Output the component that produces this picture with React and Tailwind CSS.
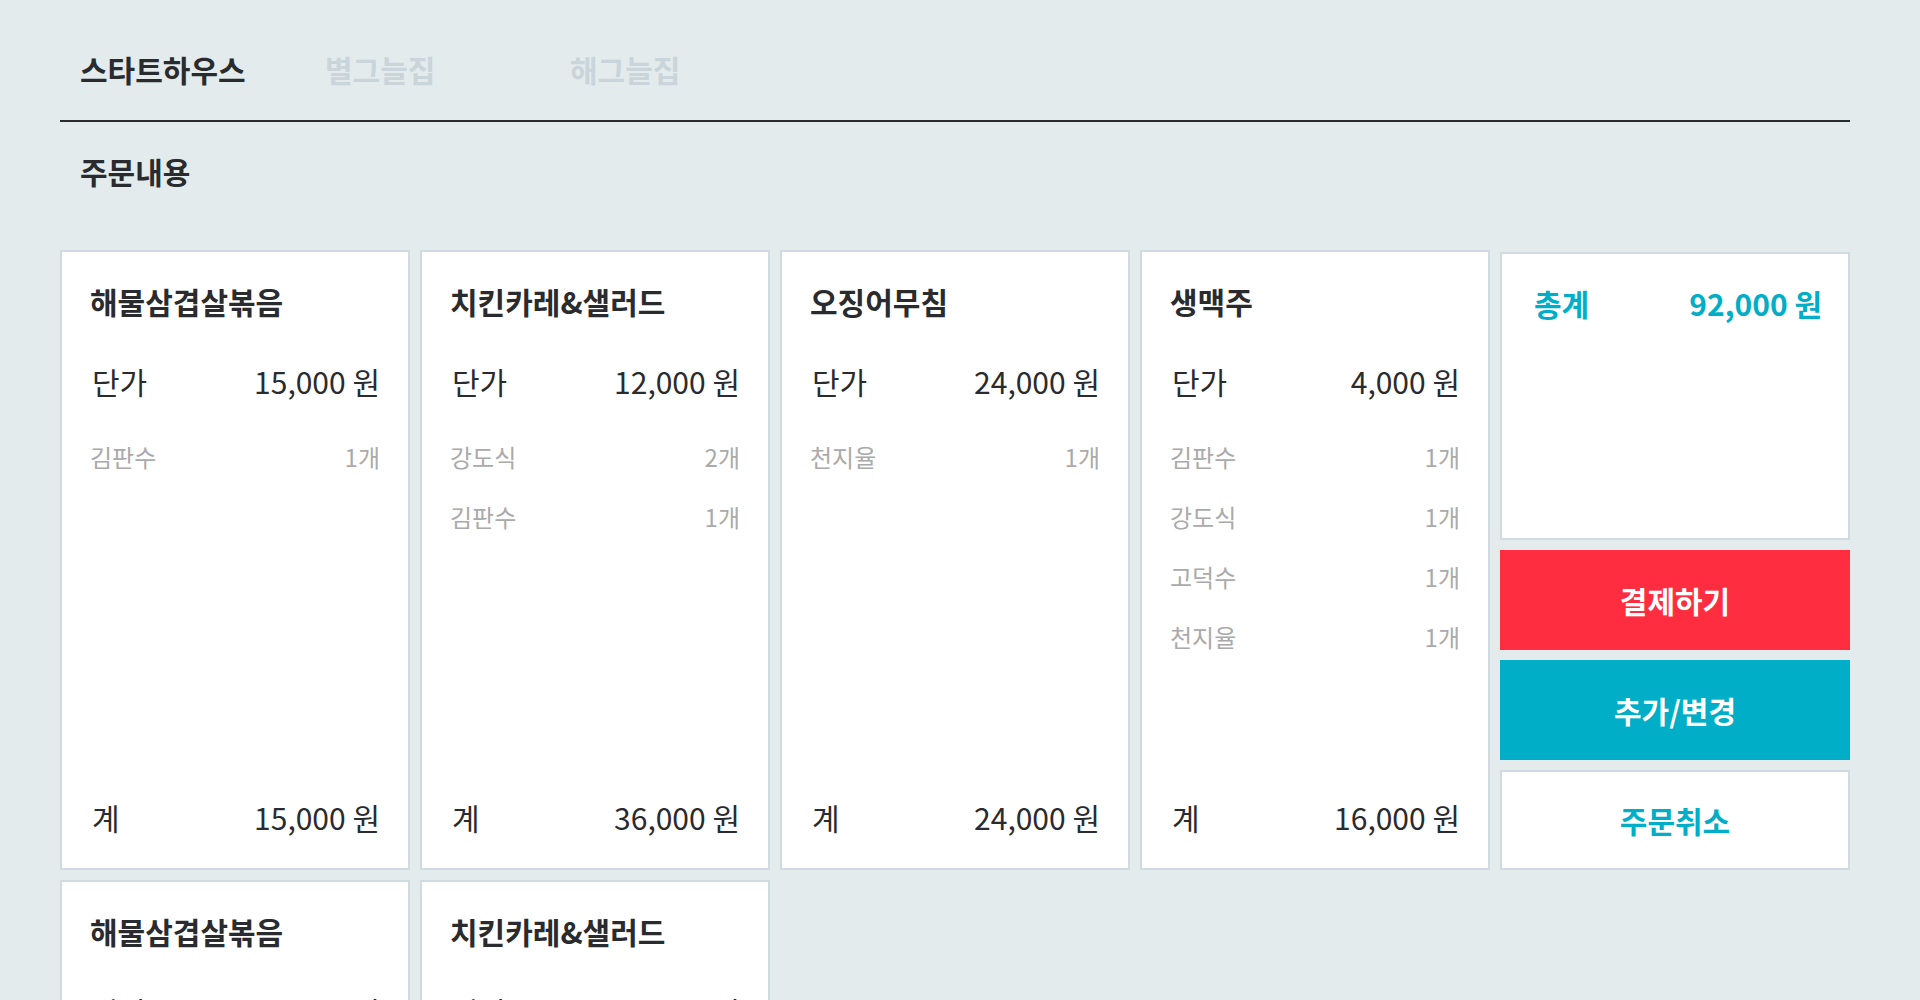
const tabs = [
  { label: '스타트하우스', active: true },
  { label: '별그늘집', active: false },
  { label: '해그늘집', active: false },
];

const orders = [
  { name: '해물삼겹살볶음', price: '15,000 원', items: [['김판수', '1개']], sum: '15,000 원' },
  { name: '치킨카레&샐러드', price: '12,000 원', items: [['강도식', '2개'], ['김판수', '1개']], sum: '36,000 원' },
  { name: '오징어무침', price: '24,000 원', items: [['천지율', '1개']], sum: '24,000 원' },
  {
    name: '생맥주',
    price: '4,000 원',
    items: [['김판수', '1개'], ['강도식', '1개'], ['고덕수', '1개'], ['천지율', '1개']],
    sum: '16,000 원',
  },
];

const moreOrders = [
  { name: '해물삼겹살볶음', price: '15,000 원', items: [['김판수', '1개']], sum: '15,000 원' },
  { name: '치킨카레&샐러드', price: '12,000 원', items: [['강도식', '2개'], ['김판수', '1개']], sum: '36,000 원' },
];

const OrderCard = ({ order }) => (
  <div className="flex flex-col bg-white border-2 border-[#cfdbe0] px-[28px] pt-[29px] pb-[31px]">
    <h3 className="text-[30px] leading-[40px] font-bold text-[#2a2b2e]">{order.name}</h3>
    <div className="flex justify-between mt-[40px] text-[30px] leading-[40px] text-[#2a2b2e]">
      <span className="pl-[2px]">단가</span>
      <span>{order.price}</span>
    </div>
    <ul className="mt-[26px] flex-1">
      {order.items.map(([who, qty], i) => (
        <li key={i} className="flex justify-between h-[60px] items-center text-[24px] text-[#aaaaaa]">
          <span>{who}</span>
          <span>{qty}</span>
        </li>
      ))}
    </ul>
    <div className="flex justify-between text-[30px] leading-[40px] text-[#2a2b2e]">
      <span className="pl-[2px]">계</span>
      <span>{order.sum}</span>
    </div>
  </div>
);

export default function App() {
  return (
    <div className="min-h-screen bg-[#e3ebed] font-['Noto_Sans_CJK_KR','Noto_Sans',sans-serif]">
      <div className="w-[1790px] ml-[60px]">
        <nav className="flex border-b-2 border-[#2a2b2e] pt-[49px] pb-[31px]">
          {tabs.map((t) => (
            <div
              key={t.label}
              className={
                t.active
                  ? 'w-[245px] pl-[20px] text-[30px] leading-[40px] font-bold text-[#2a2b2e]'
                  : 'w-[245px] pl-[20px] text-[30px] leading-[40px] font-bold text-[#c9d5da]'
              }
            >
              {t.label}
            </div>
          ))}
        </nav>

        <h2 className="pl-[20px] pt-[29px] text-[30px] leading-[40px] font-bold text-[#2a2b2e]">주문내용</h2>

        <div className="grid grid-cols-5 auto-rows-[620px] gap-[10px] mt-[59px] pb-[40px]">
          {orders.map((o, i) => (
            <OrderCard key={i} order={o} />
          ))}

          <div className="flex flex-col gap-[10px] pt-[2px]">
            <div className="flex-1 bg-white border-2 border-[#cfdbe0] pl-[32px] pr-[26px] pt-[29px]">
              <div className="flex justify-between text-[30px] leading-[40px] font-bold text-[#00aec8]">
                <span>총계</span>
                <span>92,000 원</span>
              </div>
            </div>
            <button className="h-[100px] bg-[#ff2d3f] text-white text-[30px] font-bold">결제하기</button>
            <button className="h-[100px] bg-[#00aec8] text-white text-[30px] font-bold">추가/변경</button>
            <button className="h-[100px] bg-white border-2 border-[#cfdbe0] text-[#00aec8] text-[30px] font-bold">
              주문취소
            </button>
          </div>

          {moreOrders.map((o, i) => (
            <OrderCard key={'m' + i} order={o} />
          ))}
        </div>
      </div>
    </div>
  );
}
